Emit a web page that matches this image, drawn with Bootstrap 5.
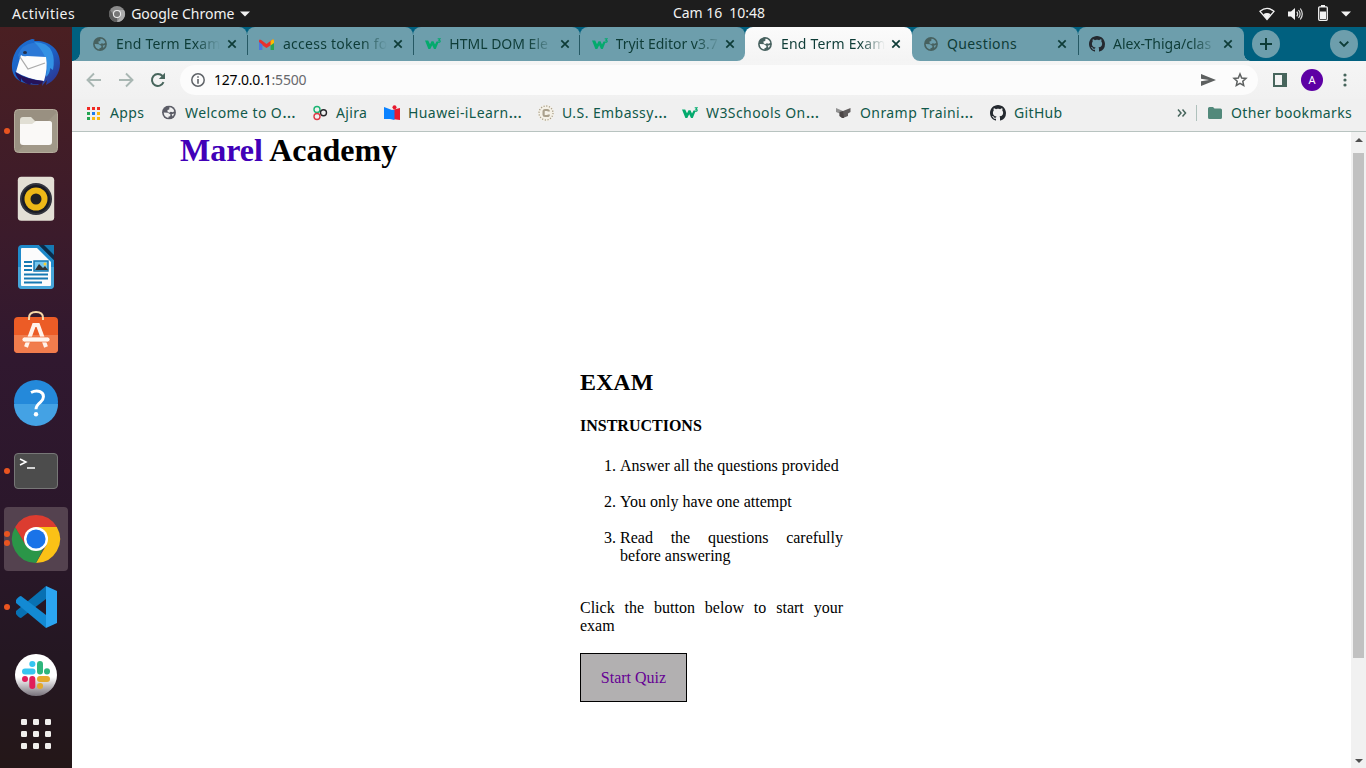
<!DOCTYPE html>
<html lang="en">
<head>
<meta charset="utf-8">
<meta name="viewport" content="width=device-width, initial-scale=1">
<title>End Term Exam</title>
<link href="https://cdn.jsdelivr.net/npm/bootstrap@5.3.0/dist/css/bootstrap.min.css" rel="stylesheet">
<style>
body{height:768px;overflow:hidden;font-family:"Noto Sans",sans-serif;font-size:14px;line-height:20px;color:#000}
svg{display:block;flex:none;overflow:visible}
.sysbar{height:27px;background:#1d1d1d;color:#f2f2f2}
.sysbar .act{margin-left:12px;letter-spacing:.48px}
.sysbar .gc{margin-left:6px}
.sysbar .clock{left:673px;top:3px;letter-spacing:-.05px}
.dock{width:72px;background:linear-gradient(#4a1f22 0,#3b1b2b 28%,#30182f 45%,#2b172b 65%,#241722 85%,#241718);padding-top:2px}
.dock-item{height:68px}
.dock-item.lifted{padding-bottom:3px}
.dock-item.current::before{content:"";position:absolute;inset:2px 4px;background:#54424f;border-radius:4px}
.dock-item svg{position:relative}
.dock-item i{position:absolute;left:4px;width:6px;height:6px;border-radius:3px;background:#e95420;top:31px}
.dock-item i.up{top:26px}.dock-item i.down{top:35px}
.launcher{height:50px}
.tabs{height:34px;background:#00607f;padding-left:8px;position:relative}
.tabs::before{content:"";position:absolute;left:0;bottom:0;width:8px;height:8px;background:radial-gradient(circle at 0 0,#00607f 7.5px,#6d9eac 8px)}
.tab{width:166.3px;height:34px;background:#6d9eac;border-radius:8px 8px 0 0;color:#0e3c37;padding:0 8px 0 13px;position:relative}
.tab:first-child{width:167px}
.tab .caption{width:104px;margin-left:9px;white-space:nowrap;-webkit-mask-image:linear-gradient(90deg,#000 76%,transparent);mask-image:linear-gradient(90deg,#000 76%,transparent)}
.tab .caption.whole{-webkit-mask-image:none;mask-image:none}
.tab .t1{letter-spacing:.2px}
.tab .t6{letter-spacing:.38px}
.tab .t2{letter-spacing:.25px}
.tab .t3,.tab .t7{margin-left:8px}
.tab .close-x{margin-left:auto;margin-right:2px}
.tab.sep::after{content:"";position:absolute;right:-.7px;top:8px;width:1px;height:20px;background:#265964;z-index:2}
.tab.open{background:linear-gradient(#fbfbfb,#f4f4f4)}
.tab.before-open{border-bottom-right-radius:8px}
.tab.after-open{border-bottom-left-radius:8px}
.underlay{background:linear-gradient(#00607f 50%,#f4f4f4 50%)}
.tab.last{width:166px}
.tab.last::after{content:"";position:absolute;left:100%;bottom:0;width:7px;height:7px;background:radial-gradient(circle at 100% 0,#00607f 6.5px,#6d9eac 7px)}
.round{width:28px;height:28px;border-radius:50%;background:#6d9eac}
.toolbar-row{height:38px;background:linear-gradient(#f5f5f5,#f1f1f1);padding-left:14px}
.omnibox{width:1078px;height:30px;border-radius:15px;background:#fcfcfc;margin-left:14px;padding:0 10px 0 11px}
.url{margin-left:9px;letter-spacing:-.2px}
.avatar{width:22px;height:22px;border-radius:50%;background:#5d00a4;color:#fff;font-size:11px;line-height:22px}
.marks{height:33px;background:#f0f0f0;border-bottom:1px solid #b8c3c0;color:#11594a;padding-left:14px;white-space:nowrap;padding-bottom:4px;letter-spacing:.34px}
.marks .bm{gap:8px}
.marks .bm span{line-height:20px}
.marks .cut{letter-spacing:.42px}
.marks .cut b{font-weight:400;font-size:17px;line-height:0}
.marks svg{width:16px}
.page{background:#fff;font-family:"Liberation Serif",serif;font-size:16px;line-height:18px}
.brand-title{font-size:32px;line-height:37px;margin:0 0 0 108px}
.brand-title span{color:#4100b8}
.exam{width:263px;margin:200px 0 0 508px;text-align:justify}
.exam h2{font-size:24px;line-height:27px;margin:0 0 21px}
.exam ol{padding-left:40px;margin:22px 0 34px}
.exam li+li{margin-top:18px}
.start{border:1px solid #000;background:#b2b0b1;color:#660094;width:107px;height:49px;margin-top:18px}
.scroller{width:15px;background:#f1f1f1;padding:6px 0 5px}
.thumb{width:11px;height:505px;background:#c1c1c1;margin-top:11px}
.w1{width:75px}.w2{width:151px}.w3{width:72px}.w4{width:154px}.w5{width:144px}.w6{width:154px}.w7{width:154px}.w8{width:80px}
</style>
</head>
<body class="d-flex flex-column">
<svg width="0" height="0" class="position-absolute">
<defs>
<symbol id="globe" viewBox="0 0 16 16"><circle cx="8" cy="8" r="7.900" fill="currentColor"/><path d="M8.500 1.900Q12.800 2.200 14 6.500L12.300 7.800 10 7.200 8.200 8.400 6.400 7 6.200 5.200 8.300 4.600zM1.900 7.900 6.800 8.300 9.700 10.200 9.300 12.300 7.600 12.700 7.200 14.200Q2.500 13.300 1.900 7.900zM11 10l3-.8-1.700 3.300z" fill="var(--hole)"/></symbol>
<symbol id="x" viewBox="0 0 10 10"><path d="m1.3 1.3 7.400 7.400m0-7.400L1.300 8.700" stroke="#0e3c37" stroke-width="1.700"/></symbol>
<symbol id="w3" viewBox="0 0 16 12"><path d="M0 2.500h3.200L5 6.300 6.500 3.200h2L10 6.600 11.500 3.500h2.300L10.800 11H9L7.200 7.200 5.300 11H3.400z" fill="#04aa6d"/><path d="M12.700.7h2.400l-1.200 1.500c2 .1 1.800 2.600-1.300 2" fill="none" stroke="#04aa6d" stroke-width="1.100"/></symbol>
<symbol id="gh" viewBox="0 0 16 16"><path fill="#24292f" d="M8 0C3.58 0 0 3.58 0 8c0 3.54 2.29 6.53 5.47 7.59.4.07.55-.17.55-.38 0-.19-.01-.82-.01-1.49-2.01.37-2.53-.49-2.69-.94-.09-.23-.48-.94-.82-1.13-.28-.15-.68-.52-.01-.53.63-.01 1.08.58 1.23.82.72 1.21 1.87.87 2.33.66.07-.52.28-.87.51-1.07-1.78-.2-3.64-.89-3.64-3.95 0-.87.31-1.59.82-2.15-.08-.2-.36-1.02.08-2.12 0 0 .67-.21 2.2.82.64-.18 1.32-.27 2-.27s1.36.09 2 .27c1.53-1.04 2.2-.82 2.2-.82.44 1.1.16 1.92.08 2.12.51.56.82 1.27.82 2.15 0 3.07-1.87 3.75-3.65 3.95.29.25.54.73.54 1.48 0 1.07-.01 1.93-.01 2.2 0 .21.15.46.55.38A8.01 8.01 0 0 0 16 8c0-4.42-3.58-8-8-8z"/></symbol>
</defs>
</svg>

<header class="sysbar d-flex align-items-center position-relative flex-shrink-0">
  <span class="act">Activities</span>
  <svg width="16" height="16" viewBox="0 0 16 16" style="margin-left:34px"><circle cx="8" cy="8" r="8" fill="#8b8b8b"/><path d="M8 4H15A8 8 0 0 1 8 16l4-6z" fill="#adadad"/><path d="M8 16A8 8 0 0 1 1.1 4L5 10l3 2z" fill="#5f5f5f"/><circle cx="8" cy="8" r="4.1" fill="#eee"/><circle cx="8" cy="8" r="3" fill="#777"/></svg>
  <span class="gc">Google Chrome</span>
  <svg width="10" height="6" viewBox="0 0 10 6" style="margin-left:6px"><path d="M0 .5h10L5 5.5z" fill="#f2f2f2"/></svg>
  <span class="clock position-absolute">Cam 16&nbsp; 10:48</span>
  <div class="d-flex align-items-center ms-auto" style="padding-right:15px">
    <svg width="16" height="14" viewBox="0 0 16 14"><path d="M1 4.3Q8-1.5 15 4.3L8 12.5z" fill="none" stroke="#f2f2f2" stroke-width="1.3"/><path d="M4.3 7.3Q8 4.8 11.7 7.3L8 12.6z" fill="#f2f2f2"/></svg>
    <svg width="15" height="14" viewBox="0 0 15 14" style="margin-left:13px"><path d="M0 4.5h3L7 1v12L3 9.5H0z" fill="#f2f2f2"/><path d="M8.8 4.7q1.8 2.3 0 4.6M10.5 3q3.2 4 0 8M12.3 1.5q4 5.5 0 11" fill="none" stroke="#ddd" stroke-width="1.2"/></svg>
    <svg width="10" height="16" viewBox="0 0 10 16" style="margin-left:15px;margin-top:-1px"><rect x=".7" y="1.8" width="8.6" height="13.5" rx="1" fill="none" stroke="#f2f2f2" stroke-width="1.3"/><path d="M3 0h4v2H3zM2 6.5h6v7.5H2z" fill="#f2f2f2"/></svg>
    <svg width="10" height="6" viewBox="0 0 10 6" style="margin-left:13px"><path d="M0 .5h10L5 5.5z" fill="#f2f2f2"/></svg>
  </div>
</header>

<div class="d-flex flex-grow-1 overflow-hidden">
<aside class="dock d-flex flex-column flex-shrink-0">
  <div class="dock-item position-relative d-flex align-items-center justify-content-center">
    <svg width="48" height="48" viewBox="0 0 48 48"><defs><linearGradient id="tb" x2="1" y2="1"><stop stop-color="#1d6fd2"/><stop offset=".55" stop-color="#1c60c4"/><stop offset="1" stop-color="#302a86"/></linearGradient></defs><path d="M3 14C6 7 13 2 20 0q4 0 2 2c14-1 26 7 26 22 0 11-6 18-14 22l1-5-5 6 1-6-5 5C14 46 3 42 1 34-1 28 0 20 3 14z" fill="url(#tb)"/><path d="M6 16Q10 5 21 4q14 0 17 10 4 10-3 23L10 25z" fill="#2b78d6"/><path d="M22 3q14 0 18 10 3 7 1 18l-3-2q0 6-4 9 3-12-1-20Q29 9 22 3z" fill="#3391e4"/><path d="M4 33 8 19 9 16q2 2 6 1l19 1q2 11-2 24-17-2-28-9z" fill="#fcfcfc"/><path d="m8 18 8 12 17-6" fill="none" stroke="#aaa" stroke-width="1.300"/><path d="M3 33q13 8 28 9l-2 3q-8 1-10-1l-1 2q-8-3-9-7v4Q4 38 3 33z" fill="#26135a"/><ellipse cx="13" cy="13.500" rx="2" ry="1.500" fill="#24304a"/></svg>
  </div>
  <div class="dock-item position-relative d-flex align-items-center justify-content-center"><i></i>
    <svg width="46" height="46" viewBox="0 0 46 46"><rect x="1.500" y="1.500" width="43" height="43" rx="4" fill="#999081" stroke="#b5ac9c"/><path d="M44 4v36a4 4 0 0 1-4 4H4z" fill="#aaa292" opacity=".5"/><path d="M7 12q0-3 3-3h8l4 4h14q3 0 3 3v18H7z" fill="#e1dfd4"/><path d="M7 16h12l4-3h13q3 0 3 3v18q0 3-3 3H10q-3 0-3-3z" fill="#faf9f7"/></svg>
  </div>
  <div class="dock-item position-relative d-flex align-items-center justify-content-center">
    <svg width="38" height="46" viewBox="0 0 38 46"><rect x=".8" y=".8" width="36.4" height="44" rx="3.5" fill="#e3dfd5"/><circle cx="19" cy="23" r="16" fill="#32343d"/><circle cx="19" cy="23" r="14" fill="#1a1c25"/><circle cx="19" cy="23" r="11.500" fill="#edb817"/><circle cx="19" cy="23" r="5.500" fill="#202124"/></svg>
  </div>
  <div class="dock-item position-relative d-flex align-items-center justify-content-center">
    <svg width="38" height="46" viewBox="0 0 38 46"><path d="M1 5q0-4 4-4h17l15 15v25q0 4-4 4H5q-4 0-4-4z" fill="#1f8aca"/><path d="M1 23h36v18q0 4-4 4H5q-4 0-4-4z" fill="#46a5d9"/><path d="M4 5q0-1 1-1h15l14 14v23q0 1-1 1H5q-1 0-1-1z" fill="#fcfcfc"/><path d="M22 1h11L37 10V16z" fill="#0c2c48"/><path d="M27 1h10v10z" fill="#1679b3"/><path d="M7 18h8M7 22h8M7 26h8M7 30.500h24M7 34.500h24M7 38.500h18" stroke="#1679b3" stroke-width="2"/><path d="M17 17h14v10H17z" fill="#75c7ee" stroke="#1679b3" stroke-width="1.500"/><path d="m18 26 4-6 4 4 2-2 3 4z" fill="#333"/><circle cx="28" cy="20" r="1.500" fill="#f8cd32"/></svg>
  </div>
  <div class="dock-item lifted position-relative d-flex align-items-center justify-content-center">
    <svg width="44" height="46" viewBox="0 0 44 46"><rect y="6" width="44" height="36" rx="4" fill="#ec5c26"/><path d="M0 24h44v14q0 4-4 4H4q-4 0-4-4z" fill="#f17d4d"/><path d="M15 9V7q0-6 7-6t7 6v2" fill="none" stroke="#f8d8a8" stroke-width="2"/><path d="m12 36 8-22h4l8 22" fill="none" stroke="#fff3eb" stroke-width="4"/><rect x="8" y="26" width="28" height="5" rx="2.500" fill="#fff6ef" stroke="#ee6e3a" stroke-width=".7"/></svg>
  </div>
  <div class="dock-item lifted position-relative d-flex align-items-center justify-content-center">
    <svg width="44" height="44" viewBox="0 0 44 44"><circle cx="22" cy="22" r="22" fill="#2489da"/><path d="M0 24h44a22 22 0 0 1-44 0z" fill="#44a2e4"/><path d="M17 12.500q5-2.500 9-.8c5 2.300 4 7.500.5 10.500-3 2.500-4.500 4-4.500 7" fill="none" stroke="#fff" stroke-width="3"/><circle cx="22" cy="34.200" r="2.200" fill="#fff"/></svg>
  </div>
  <div class="dock-item position-relative d-flex align-items-center justify-content-center"><i></i>
    <svg width="44" height="36" viewBox="0 0 44 36"><rect x=".5" y=".5" width="43" height="35" rx="3.500" fill="#4c4c4c" stroke="#777"/><path d="m6 6 6 3-6 3M13 15h8" fill="none" stroke="#fff" stroke-width="1.500"/></svg>
  </div>
  <div class="dock-item current position-relative d-flex align-items-center justify-content-center"><i class="up"></i><i class="down"></i>
    <svg width="48" height="48" viewBox="0 0 48 48"><path d="M24 24 3.200 12A24 24 0 0 1 44.800 12z" fill="#dc3c30"/><path d="M24 12h20.800A24 24 0 0 1 24 48l10.400-18z" fill="#fbc116"/><path d="M24 48A24 24 0 0 1 3.200 12l10.400 18L24 36l7-2z" fill="#2b9648"/><path d="M3.200 12 13.600 30 24 24V12z" fill="#dc3c30"/><circle cx="24" cy="24" r="12" fill="#fff"/><circle cx="24" cy="24" r="9.600" fill="#1a73e8"/></svg>
  </div>
  <div class="dock-item position-relative d-flex align-items-center justify-content-center"><i></i>
    <svg width="42" height="42" viewBox="0 0 42 42"><path d="M31 0v13L6 32q-2 0-5-4v-3z" fill="#0871b3"/><path d="M31 42V29L6 10q-2 0-5 4v3z" fill="#138ad3"/><path d="m31 0 11 5v32l-11 5z" fill="#2ba5f1"/></svg>
  </div>
  <div class="dock-item position-relative d-flex align-items-center justify-content-center">
    <svg width="42" height="42" viewBox="0 0 42 42"><defs><linearGradient id="sl" x2="0" y2="1"><stop offset=".55" stop-color="#fff"/><stop offset="1" stop-color="#77717a"/></linearGradient></defs><circle cx="21" cy="21" r="21" fill="url(#sl)"/><g stroke-width="6" stroke-linecap="round"><path d="M10 17.500h7.500M17.300 10h.1" stroke="#36c5f0"/><path d="M25 10v7.500M32 17.300v.1" stroke="#2eb67d"/><path d="M10 25v.1M17.300 25v7" stroke="#e01e5a"/><path d="M25 25h7M25 32h.1" stroke="#e3a92d"/></g></svg>
  </div>
  <div class="launcher d-flex align-items-center justify-content-center">
    <svg width="30" height="30" viewBox="0 0 30 30" fill="#f1efed"><g id="r"><rect width="6" height="6" rx="1.200"/><rect x="12" width="6" height="6" rx="1.200"/><rect x="24" width="6" height="6" rx="1.200"/></g><use href="#r" y="12"/><use href="#r" y="24"/></svg>
  </div>
</aside>

<main class="d-flex flex-column flex-grow-1 overflow-hidden">
  <div class="tabs d-flex flex-shrink-0">
    <div class="tab sep d-flex align-items-center"><svg width="14" height="14" style="color:#47615f;--hole:#6d9eac"><use href="#globe"/></svg><span class="caption t1">End Term Exam</span><svg class="close-x" width="10" height="10"><use href="#x"/></svg></div>
    <div class="tab sep d-flex align-items-center"><svg width="15" height="11" viewBox="0 0 15 11" style="margin-left:-1px"><path d="M0 2q0-2.500 2.200-1l5.300 4 5.300-4Q15-.5 15 2v2L7.500 9 0 4z" fill="#e8302c"/><path d="M0 3v8h3.400V5.400z" fill="#4c78e0"/><path d="M15 3v8h-3.400V5.400z" fill="#28a452"/><path d="M11.600 2Q15-1.500 15 2v2l-3.400 2.400z" fill="#fbbc04"/></svg><span class="caption t2">access token fo</span><svg class="close-x" width="10" height="10"><use href="#x"/></svg></div>
    <div class="tab sep d-flex align-items-center"><svg width="16" height="12" style="margin-left:-1px"><use href="#w3"/></svg><span class="caption t3">HTML DOM Ele</span><svg class="close-x" width="10" height="10"><use href="#x"/></svg></div>
    <div class="underlay"><div class="tab before-open d-flex align-items-center" style="width:165.400px"><svg width="16" height="12" style="margin-left:-1px"><use href="#w3"/></svg><span class="caption t3">Tryit Editor v3.7</span><svg class="close-x" width="10" height="10"><use href="#x"/></svg></div></div>
    <div class="tab open d-flex align-items-center" style="width:167px"><svg width="14" height="14" style="color:#47615f;--hole:#fafafa"><use href="#globe"/></svg><span class="caption t1">End Term Exam</span><svg class="close-x" width="10" height="10" style="margin-right:3px"><use href="#x"/></svg></div>
    <div class="underlay"><div class="tab after-open sep d-flex align-items-center" style="width:166px"><svg width="14" height="14" style="color:#47615f;--hole:#6d9eac;margin-left:-1px"><use href="#globe"/></svg><span class="caption whole t6">Questions</span><svg class="close-x" width="10" height="10" style="margin-right:3px"><use href="#x"/></svg></div></div>
    <div class="tab last d-flex align-items-center"><svg width="16" height="16" style="margin-left:-2px"><use href="#gh"/></svg><span class="caption t7">Alex-Thiga/clas</span><svg class="close-x" width="10" height="10" style="margin-right:3px"><use href="#x"/></svg></div>
    <div class="round d-flex align-items-center justify-content-center" style="margin:3px 0 0 8px"><svg width="12" height="12" viewBox="0 0 12 12"><path d="M6 0v12M0 6h12" stroke="#0e3c37" stroke-width="2"/></svg></div>
    <div class="round d-flex align-items-center justify-content-center" style="margin:3px 8px 0 auto"><svg width="10" height="6" viewBox="0 0 10 6"><path d="m.7.7 4.300 4.300L9.300.7" fill="none" stroke="#0e3c37" stroke-width="1.900"/></svg></div>
  </div>
  <div class="toolbar-row d-flex align-items-center flex-shrink-0">
    <svg width="16" height="16" viewBox="0 0 16 16" fill="none" stroke="#a9b7b3" stroke-width="1.900"><path d="M15 8H2M8 1.500 1.500 8 8 14.500"/></svg>
    <svg width="16" height="16" viewBox="0 0 16 16" fill="none" stroke="#a9b7b3" stroke-width="1.900" style="margin-left:16px"><path d="M1 8h13M8 1.500 14.500 8 8 14.500"/></svg>
    <svg width="16" height="16" viewBox="0 0 16 16" style="margin-left:16px"><path d="M13.500 10.200A6 6 0 1 1 12.500 4" fill="none" stroke="#47655c" stroke-width="2"/><path d="M15 .8V7H8.800z" fill="#47655c"/></svg>
    <div class="omnibox d-flex align-items-center">
      <svg width="14" height="14" viewBox="0 0 14 14"><circle cx="7" cy="7" r="6.200" fill="none" stroke="#5f6368" stroke-width="1.500"/><path d="M6.200 3.200h1.600v1.600H6.200zM6.200 6h1.600v4.800H6.200z" fill="#5f6368"/></svg>
      <span class="url">127.0.0.1<span style="color:#68696d">:5500</span></span>
      <svg class="ms-auto" width="15" height="12" viewBox="0 0 15 12"><path d="M0 0 15 6 0 12V7.300L8 6 0 4.700z" fill="#5d6060"/></svg>
      <svg width="16" height="16" viewBox="0 0 16 16" style="margin-left:16px"><path d="m8 2 1.700 4 4.300.4-3.200 2.900.9 4.200L8 11.300l-3.700 2.200.9-4.200L2 6.400 6.300 6z" fill="none" stroke="#5d6060" stroke-width="1.500"/></svg>
    </div>
    <svg width="14" height="14" viewBox="0 0 14 14" style="margin-left:15px"><path d="M1 1h12v12H1z" fill="none" stroke="#47655c" stroke-width="2"/><path d="M9 0h5v14H9z" fill="#47655c"/></svg>
    <div class="avatar text-center" style="margin-left:14px">A</div>
    <svg width="4" height="14" viewBox="0 0 4 14" fill="#47655c" style="margin-left:20px"><circle cx="2" cy="2" r="1.600"/><circle cx="2" cy="7" r="1.600"/><circle cx="2" cy="12" r="1.600"/></svg>
  </div>
  <div class="marks d-flex align-items-center flex-shrink-0">
    <div class="bm w1 d-flex align-items-center"><svg height="13" viewBox="0 0 16 13"><path d="M1 0h3v3H1zM6 0h3v3H6zM11 0h3v3h-3z" fill="#f02a24"/><path d="M1 5h3v3H1z" fill="#22a451"/><path d="M6 5h3v3H6z" fill="#1d7cf0"/><path d="M11 5h3v3h-3zM6 10h3v3H6zM11 10h3v3h-3z" fill="#fbb90f"/><path d="M1 10h3v3H1z" fill="#22a451"/></svg><span>Apps</span></div>
    <div class="bm w2 d-flex align-items-center"><svg height="16" style="color:#5b5c66;--hole:#f0f0f0"><use href="#globe" x="1" y=".5" width="14" height="14"/></svg><span class="cut">Welcome to O<b>…</b></span></div>
    <div class="bm w3 d-flex align-items-center"><svg height="16" viewBox="0 0 16 16" fill="none" stroke-width="1.400"><circle cx="5" cy="4.500" r="3" stroke="#1ab573"/><circle cx="11.500" cy="7.800" r="3" stroke="#27272b"/><circle cx="5" cy="11.500" r="3" stroke="#dd3b45"/></svg><span>Ajira</span></div>
    <div class="bm w4 d-flex align-items-center"><svg height="16" viewBox="0 0 16 16"><path d="M0 2l8 3v9H0z" fill="#0b82ff"/><path d="M8 5l8-2v12l-8-1z" fill="#e7192e"/><path d="M6 5h4.500v10L6 14z" fill="#0b82ff"/><circle cx="10.500" cy="2.200" r="2" fill="#e7192e"/></svg><span class="cut">Huawei-iLearn<b>…</b></span></div>
    <div class="bm w5 d-flex align-items-center"><svg height="16" viewBox="0 0 16 16"><circle cx="8" cy="8" r="8" fill="#f5f1e7"/><circle cx="8" cy="8" r="7" fill="none" stroke="#aaa08c" stroke-width="1.300" stroke-dasharray="1.200 1.549"/><path d="M10.800 6.500Q10.800 5 9.300 5H7Q5.600 5 5.600 6.500v3.200Q5.600 11 7 11h2.300q1.500 0 1.500-1.500" fill="none" stroke="#aaa08c" stroke-width="2.200"/></svg><span class="cut">U.S. Embassy<b>…</b></span></div>
    <div class="bm w6 d-flex align-items-center"><svg height="12"><use href="#w3" width="16" height="12"/></svg><span class="cut">W3Schools On<b>…</b></span></div>
    <div class="bm w7 d-flex align-items-center"><svg height="12" viewBox="0 0 16 12"><path d="M0 1l7 3v7L3.500 9V6.500L0 5z" fill="#929292"/><path d="M14.500 1 7 4v7l5-2V6.500L14.500 5z" fill="#605c5c"/><path d="m3.500 5 3.500-1 1 7H6L3.500 9z" fill="#4b4646"/></svg><span class="cut">Onramp Traini<b>…</b></span></div>
    <div class="bm w8 d-flex align-items-center"><svg height="16"><use href="#gh"/></svg><span>GitHub</span></div>
    <svg height="8" viewBox="0 0 16 8" class="ms-auto" fill="none" stroke="#47655c" stroke-width="1.500"><path d="m4 .6 3 3.400-3 3.400M8.500.6l3 3.400-3 3.400"/></svg>
    <div style="width:1px;height:16px;background:#afc1bc;margin:0 10px 0 6px"></div>
    <div class="bm d-flex align-items-center" style="width:159px"><svg height="12" viewBox="0 0 16 12"><path d="M1 1.500Q1 0 2.500 0H6l1.500 1.500h6Q15 1.500 15 3v7.500q0 1.500-1.500 1.500h-11Q1 12 1 10.500z" fill="#52897b"/></svg><span>Other bookmarks</span></div>
  </div>
  <div class="d-flex flex-grow-1 overflow-hidden">
    <article class="page flex-grow-1">
      <h1 class="brand-title fw-bold"><span>Marel</span> Academy</h1>
      <section class="exam">
        <h2 class="fw-bold">EXAM</h2>
        <b class="d-block">INSTRUCTIONS</b>
        <ol>
          <li>Answer all the questions provided</li>
          <li>You only have one attempt</li>
          <li>Read the questions carefully before answering</li>
        </ol>
        <p class="mb-0">Click the button below to start your exam</p>
        <a class="start d-flex align-items-center justify-content-center text-decoration-none" href="#">Start Quiz</a>
      </section>
    </article>
    <div class="scroller d-flex flex-column align-items-center flex-shrink-0">
      <svg width="8" height="4" viewBox="0 0 8 4"><path d="M0 4h8L4 0z" fill="#505050"/></svg>
      <div class="thumb"></div>
      <svg width="8" height="4" viewBox="0 0 8 4" class="mt-auto"><path d="M0 0h8L4 4z" fill="#505050"/></svg>
    </div>
  </div>
</main>
</div>
<script src="https://cdn.jsdelivr.net/npm/bootstrap@5.3.0/dist/js/bootstrap.bundle.min.js"></script>
</body>
</html>
